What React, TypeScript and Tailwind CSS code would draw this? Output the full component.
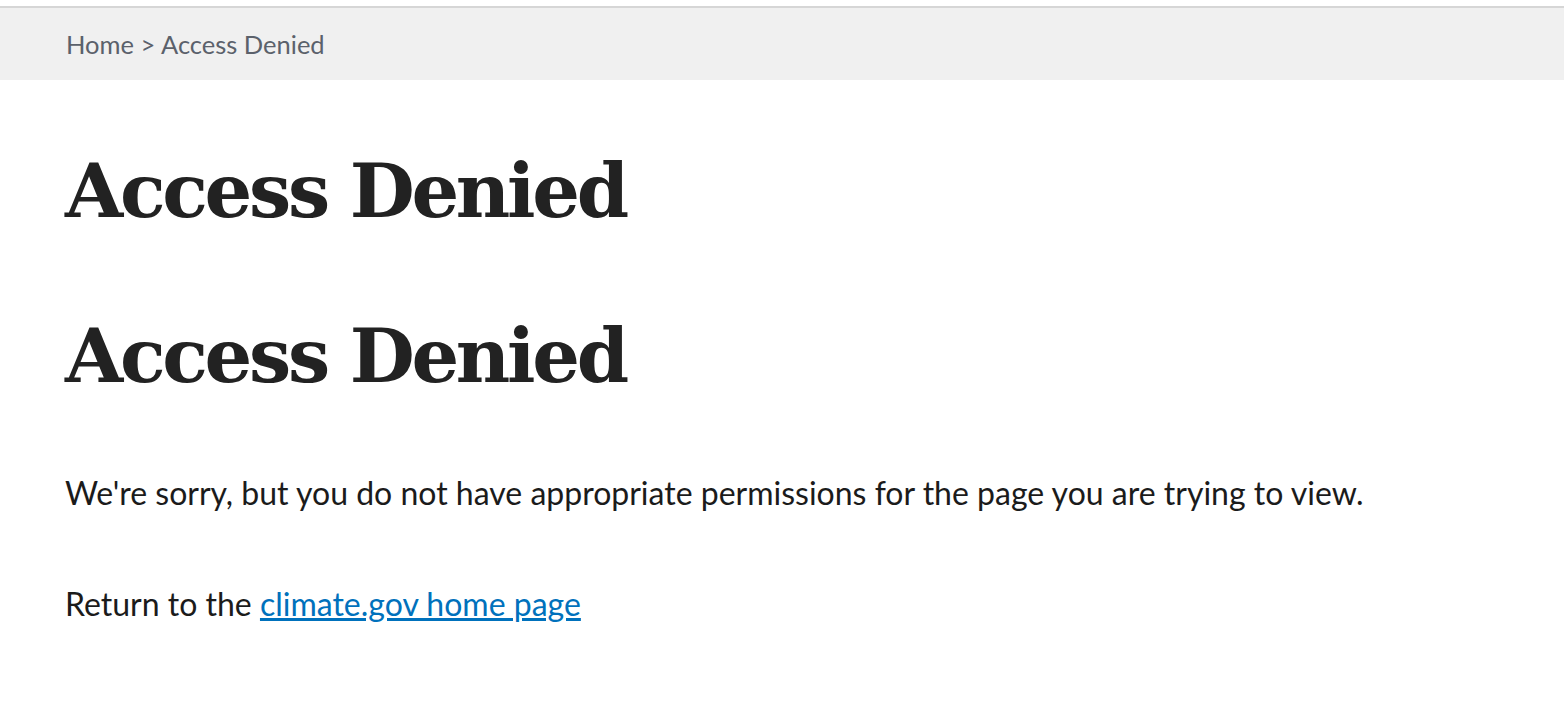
export default function App() {
  const sans = { fontFamily: "Lato, 'Noto Sans', sans-serif" };
  const serif = { fontFamily: "'DejaVu Serif', serif", letterSpacing: "-3.3px" };
  return (
    <div className="min-h-[716px] bg-white" style={sans}>
      <div className="pt-[6px]">
        <div className="border-t-2 border-[#d6d6d6] bg-[#f0f0f0] h-[74px] flex items-center px-[66px]">
          <span className="text-[25.5px] text-[#5b616b]">Home &gt; Access Denied</span>
        </div>
      </div>
      <div className="px-[65px]">
        <h1 className="font-bold text-[#222] text-[75px] leading-none mt-[74px]" style={serif}>
          Access Denied
        </h1>
        <h1 className="font-bold text-[#222] text-[75px] leading-none mt-[90px]" style={serif}>
          Access Denied
        </h1>
        <p className="text-[32px] leading-[48px] text-[#1b1b1b] mt-[75px]">
          We're sorry, but you do not have appropriate permissions for the page you are trying to view.
        </p>
        <p className="text-[32px] leading-[48px] text-[#1b1b1b] mt-[63px]">
          Return to the <a href="#" className="text-[#0071bc] underline">climate.gov home page</a>
        </p>
      </div>
    </div>
  );
}
